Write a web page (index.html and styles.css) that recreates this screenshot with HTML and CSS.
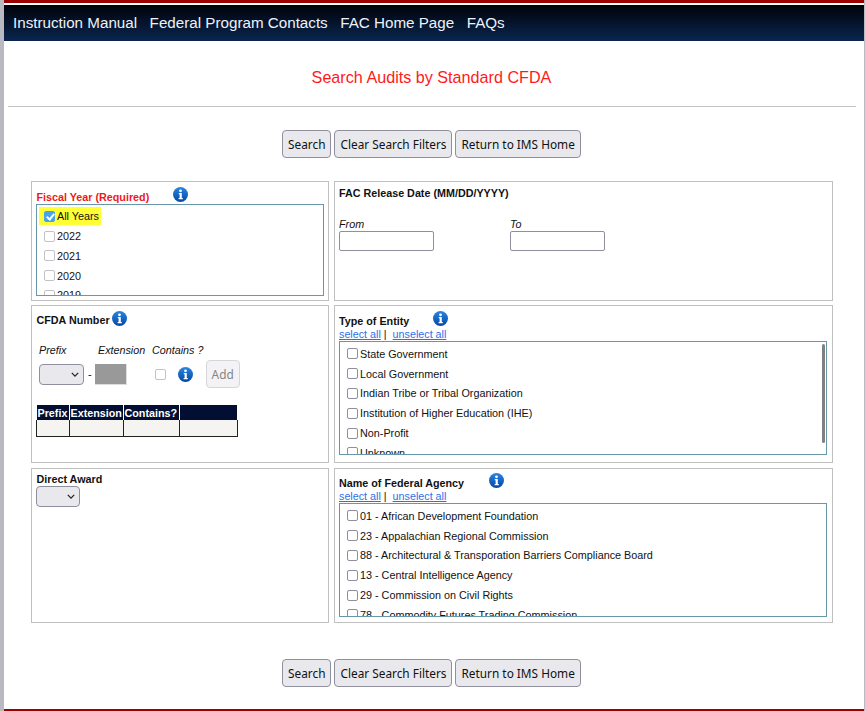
FILE: index.html
```html
<!DOCTYPE html>
<html>
  <head>
    <meta name="viewport" content="width=device-width, initial-scale=1" />
    <title>Search Audits by Standard CFDA</title>
    <link rel="stylesheet" href="styles.css">
  </head>
  <body>
    <svg class="defs" width="0" height="0">
      <defs>
        <linearGradient id="infoFill" x1="0" y1="0" x2="0" y2="1">
          <stop offset="0" stop-color="#2a86e0" />
          <stop offset="1" stop-color="#0347a8" />
        </linearGradient>
        <symbol id="info" viewBox="0 0 15 15">
          <circle cx="7.5" cy="7.5" r="7.5" fill="url(#infoFill)" />
          <circle cx="7.5" cy="3.8" r="1.4" fill="#fff" />
          <path d="M5.8 6h3v5h1v1.2H5.6V11h1V7.2h-.8z" fill="#fff" />
        </symbol>
        <symbol id="chev" viewBox="0 0 10 6">
          <path d="M1 1l4 4 4-4" fill="none" stroke="#222" stroke-width="1.6" />
        </symbol>
      </defs>
    </svg>

    <div class="page">
      <div class="nav">
        <a href="#">Instruction Manual</a>
        <a href="#">Federal Program Contacts</a>
        <a href="#">FAC Home Page</a>
        <a href="#">FAQs</a>
      </div>

      <h1 class="title">Search Audits by Standard CFDA</h1>
      <hr class="rule">

      <div class="actions">
        <button type="button" class="btn">Search</button>
        <button type="button" class="btn">Clear Search Filters</button>
        <button type="button" class="btn">Return to IMS Home</button>
      </div>

      <div class="filters">
        <div class="box">
          <div class="head head-fiscal">
            <span class="label required">Fiscal Year (Required)</span>
            <svg class="icon icon-fiscal"><use href="#info" /></svg>
          </div>
          <div class="list list-fiscal">
            <label class="row"><span class="hilite"><input type="checkbox" class="check soft" checked>All Years</span></label>
            <label class="row"><input type="checkbox" class="check soft">2022</label>
            <label class="row"><input type="checkbox" class="check soft">2021</label>
            <label class="row"><input type="checkbox" class="check soft">2020</label>
            <label class="row"><input type="checkbox" class="check soft">2019</label>
          </div>
        </div>

        <div class="box">
          <div class="label date-title">FAC Release Date (MM/DD/YYYY)</div>
          <div class="dates">
            <div class="date">
              <div class="hint">From</div>
              <input type="text" class="field">
            </div>
            <div class="date">
              <div class="hint">To</div>
              <input type="text" class="field">
            </div>
          </div>
        </div>

        <div class="box mid">
          <div class="head head-cfda">
            <span class="label">CFDA Number</span>
            <svg class="icon icon-cfda"><use href="#info" /></svg>
          </div>
          <div class="cfda-hints">
            <span class="hint hint-prefix">Prefix</span>
            <span class="hint hint-ext">Extension</span>
            <span class="hint">Contains ?</span>
          </div>
          <div class="cfda-inputs">
            <span class="pick pick-prefix">
              <select class="sel"></select>
              <svg class="chev"><use href="#chev" /></svg>
            </span>
            <span class="dash">-</span>
            <input type="text" class="ext" disabled>
            <input type="checkbox" class="check soft cfda-check">
            <svg class="icon icon-contains"><use href="#info" /></svg>
            <button type="button" class="btn add" disabled>Add</button>
          </div>
          <table class="cfda-table">
            <tr><th class="c1">Prefix</th><th class="c2">Extension</th><th class="c3">Contains?</th><th class="c4"></th></tr>
            <tr><td></td><td></td><td></td><td></td></tr>
          </table>
        </div>

        <div class="box mid">
          <div class="head head-entity">
            <span class="label">Type of Entity</span>
            <svg class="icon icon-entity"><use href="#info" /></svg>
          </div>
          <div class="links"><a href="#">select all</a> |&nbsp; <a href="#">unselect all</a></div>
          <div class="list list-wide">
            <label class="row"><input type="checkbox" class="check">State Government</label>
            <label class="row"><input type="checkbox" class="check">Local Government</label>
            <label class="row"><input type="checkbox" class="check">Indian Tribe or Tribal Organization</label>
            <label class="row"><input type="checkbox" class="check">Institution of Higher Education (IHE)</label>
            <label class="row"><input type="checkbox" class="check">Non-Profit</label>
            <label class="row"><input type="checkbox" class="check">Unknown</label>
            <div class="thumb"></div>
          </div>
        </div>

        <div class="box">
          <div class="label award-title">Direct Award</div>
          <span class="pick pick-award">
            <select class="sel"></select>
            <svg class="chev"><use href="#chev" /></svg>
          </span>
        </div>

        <div class="box">
          <div class="head head-agency">
            <span class="label">Name of Federal Agency</span>
            <svg class="icon icon-agency"><use href="#info" /></svg>
          </div>
          <div class="links"><a href="#">select all</a> |&nbsp; <a href="#">unselect all</a></div>
          <div class="list list-wide">
            <label class="row"><input type="checkbox" class="check">01 - African Development Foundation</label>
            <label class="row"><input type="checkbox" class="check">23 - Appalachian Regional Commission</label>
            <label class="row"><input type="checkbox" class="check">88 - Architectural &amp; Transporation Barriers Compliance Board</label>
            <label class="row"><input type="checkbox" class="check">13 - Central Intelligence Agency</label>
            <label class="row"><input type="checkbox" class="check">29 - Commission on Civil Rights</label>
            <label class="row"><input type="checkbox" class="check">78 - Commodity Futures Trading Commission</label>
          </div>
        </div>
      </div>

      <div class="actions actions-bottom">
        <button type="button" class="btn">Search</button>
        <button type="button" class="btn">Clear Search Filters</button>
        <button type="button" class="btn">Return to IMS Home</button>
      </div>
    </div>
  </body>
</html>
```

FILE: styles.css
```css
html, body {
  height: 100%;
}

body {
  margin: 0;
  background: #b9b9c1;
  font-family: "Liberation Sans", Arial, sans-serif;
  font-size: 10.8px;
  color: #111;
  overflow: hidden;
}

.defs {
  position: absolute;
}

.page {
  box-sizing: border-box;
  height: 711px;
  margin: 0 1px 0 4px;
  background: #fff;
  border-top: 3px solid #9c0000;
  border-bottom: 2px solid #9c0000;
  padding-top: 2px;
}

.nav {
  display: flex;
  gap: 12.5px;
  box-sizing: border-box;
  height: 36px;
  align-items: center;
  padding: 0 0 2px 9px;
  background: linear-gradient(#000208, #0a2650);
}

.nav a {
  color: #eef2f8;
  font-size: 15.2px;
  text-decoration: none;
}

.title {
  margin: 0;
  padding: 27px 5px 0 0;
  font-size: 16.16px;
  line-height: 19px;
  font-weight: normal;
  color: #ff1a1a;
  text-align: center;
}

.rule {
  margin: 19px 8px 0 4px;
  border: 0;
  border-top: 1px solid #c4c4c4;
}

.actions {
  display: flex;
  gap: 3px;
  margin: 23px 0 0 278px;
}

.actions-bottom {
  margin-top: 36px;
}

.btn {
  box-sizing: border-box;
  height: 28px;
  padding: 0 5px;
  background: #e9e9ed;
  border: 1px solid #8f8f9d;
  border-radius: 4px;
  font-family: "Noto Sans", sans-serif;
  font-size: 11.84px;
  line-height: 24px;
  color: #111;
}

.filters {
  display: grid;
  grid-template-columns: 298px 499px;
  grid-template-rows: 120px 159px 155px;
  column-gap: 5px;
  row-gap: 4px;
  margin: 23px 0 0 27px;
}

.box {
  border: 1px solid #c0c0c0;
  padding: 0 4px;
  min-width: 0;
}

.mid {
  margin-bottom: 1px;
}

.label {
  font-weight: bold;
  font-size: 10.75px;
  line-height: 13px;
}

.required {
  color: #f01818;
}

.head {
  display: flex;
  align-items: flex-end;
}

.head-fiscal {
  height: 22px;
  padding-left: 0.5px;
}

.head-cfda {
  height: 21px;
  padding-left: 0.5px;
}

.head-entity {
  height: 22px;
}

.head-agency {
  height: 21px;
}

.icon {
  flex: none;
  width: 15px;
  height: 15px;
}

.icon-fiscal {
  margin: 5px 0 2px 24px;
  align-self: flex-start;
}

.icon-cfda {
  margin: 0 0 1px 2px;
}

.icon-entity {
  margin: 0 0 2px 24px;
}

.icon-agency {
  margin: 0 0 2px 25px;
}

.icon-contains {
  margin: 0 0 0 12px;
}

.list {
  position: relative;
  overflow: hidden;
  box-sizing: border-box;
  border: 1px solid #6a96aa;
}

.list-fiscal {
  height: 92px;
  width: 288px;
  padding-top: 1.4px;
}

.list-wide {
  height: 114px;
  width: 488px;
  padding-top: 2px;
}

.row {
  display: flex;
  align-items: center;
  height: 19.8px;
  padding-left: 7px;
  white-space: nowrap;
}

.hilite {
  display: flex;
  align-items: center;
  height: 18px;
  margin-left: -5px;
  padding: 0 2px 0 5px;
  background: #ffff33;
}

.check {
  appearance: none;
  box-sizing: border-box;
  position: relative;
  flex: none;
  width: 11px;
  height: 11px;
  margin: 0 2px 0 0;
  background: #fff;
  border: 1px solid #8f8f9d;
  border-radius: 2px;
}

.soft {
  border-color: #c2c2c8;
}

.check:checked {
  background: #4aa3e8;
  border-color: #4aa3e8;
}

.check:checked::after {
  content: "";
  position: absolute;
  left: 2.5px;
  top: 0;
  width: 3px;
  height: 6px;
  border: solid #fff;
  border-width: 0 2px 2px 0;
  transform: rotate(40deg);
}

.thumb {
  position: absolute;
  right: 1px;
  top: 2px;
  width: 3px;
  height: 99px;
  background: #808080;
  border-radius: 2px;
}

.date-title {
  padding-top: 5px;
}

.dates {
  display: flex;
  gap: 76px;
  margin-top: 18px;
}

.hint {
  font-style: italic;
  font-size: 10.75px;
  line-height: 13px;
}

.field {
  display: block;
  box-sizing: border-box;
  width: 95px;
  height: 20px;
  border: 1px solid #8f8f9d;
  border-radius: 2px;
}

.cfda-hints {
  display: flex;
  padding: 17px 0 0 3px;
  height: 13px;
}

.hint-prefix {
  width: 59px;
}

.hint-ext {
  width: 54px;
}

.cfda-inputs {
  display: flex;
  align-items: center;
  height: 28px;
  margin: 3px 0 0 3px;
}

.pick {
  position: relative;
  display: inline-block;
}

.sel {
  appearance: none;
  display: block;
  box-sizing: border-box;
  height: 21px;
  background: #e9e9ed;
  border: 1px solid #8f8f9d;
  border-radius: 4px;
}

.pick-prefix .sel {
  width: 45px;
}

.pick-award .sel {
  width: 44px;
}

.chev {
  position: absolute;
  right: 5px;
  top: 8px;
  width: 8px;
  height: 5px;
}

.dash {
  margin: 0 3px 0 4px;
  font-size: 11px;
}

.ext {
  box-sizing: border-box;
  width: 32px;
  height: 21px;
  background: #999;
  border: 0;
  border-right: 1px solid #ddd;
  border-bottom: 1px solid #ddd;
}

.cfda-check {
  margin: 0 0 0 28px;
}

.add {
  margin-left: 13px;
  width: 34px;
  padding: 0;
  background: #f3f3f5;
  border-color: #d6d6da;
  color: #858585;
}

.cfda-table {
  margin-top: 17px;
  border-collapse: collapse;
  table-layout: fixed;
  width: 202px;
}

.cfda-table th {
  height: 15px;
  padding: 0 0 0 1px;
  background: #020f33;
  border-right: 1px solid #fff;
  color: #fff;
  font-size: 10.75px;
  text-align: left;
}

.cfda-table td {
  height: 16px;
  padding: 0;
  background: #f5f4f0;
  border-left: 1px solid #222;
  border-right: 1px solid #222;
  border-bottom: 1px solid #222;
}

.c1 {
  width: 31px;
}

.c2 {
  width: 52px;
}

.c3 {
  width: 54px;
}

.links {
  line-height: 13px;
  font-size: 10.75px;
}

.links a {
  color: #2f6fe8;
}

.award-title {
  padding: 4px 0 0 0.5px;
}

.pick-award {
  vertical-align: top;
}
```
